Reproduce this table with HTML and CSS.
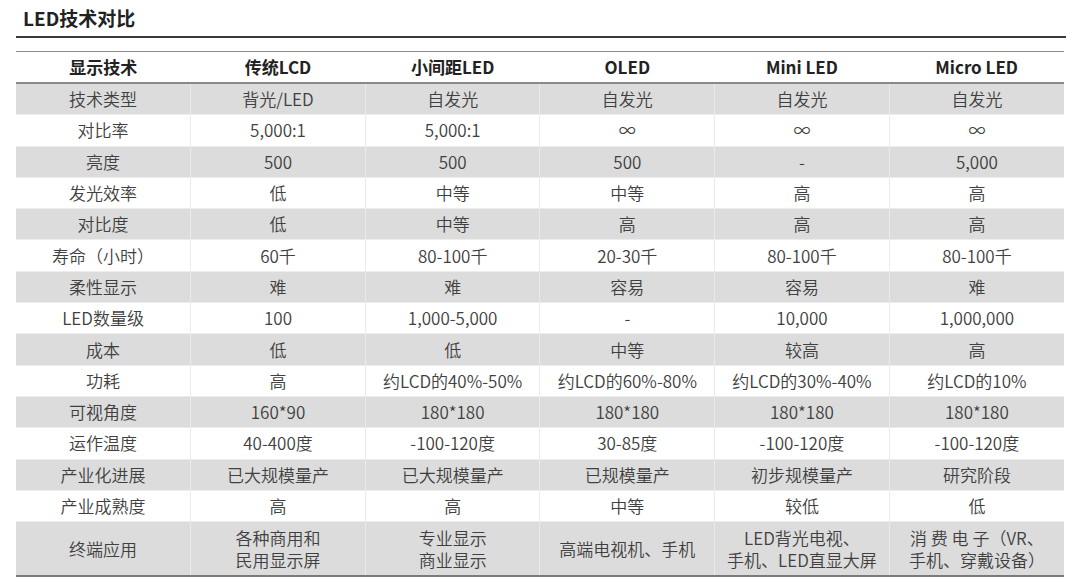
FILE: index.html
```html
<!DOCTYPE html>
<html lang="zh-CN">
<head>
<meta charset="utf-8">
<title>LED技术对比</title>
<link rel="stylesheet" href="styles.css">
</head>
<body>
<div class="page">
  <h2 class="title">LED技术对比</h2>
  <table class="cmp">
    <thead>
      <tr><th>显示技术</th><th>传统LCD</th><th>小间距LED</th><th>OLED</th><th>Mini LED</th><th>Micro LED</th></tr>
    </thead>
    <tbody>
      <tr class="g"><td>技术类型</td><td>背光/LED</td><td>自发光</td><td>自发光</td><td>自发光</td><td>自发光</td></tr>
      <tr><td>对比率</td><td>5,000:1</td><td>5,000:1</td><td>∞</td><td>∞</td><td>∞</td></tr>
      <tr class="g"><td>亮度</td><td>500</td><td>500</td><td>500</td><td>-</td><td>5,000</td></tr>
      <tr><td>发光效率</td><td>低</td><td>中等</td><td>中等</td><td>高</td><td>高</td></tr>
      <tr class="g"><td>对比度</td><td>低</td><td>中等</td><td>高</td><td>高</td><td>高</td></tr>
      <tr><td>寿命（小时）</td><td>60千</td><td>80-100千</td><td>20-30千</td><td>80-100千</td><td>80-100千</td></tr>
      <tr class="g"><td>柔性显示</td><td>难</td><td>难</td><td>容易</td><td>容易</td><td>难</td></tr>
      <tr><td>LED数量级</td><td>100</td><td>1,000-5,000</td><td>-</td><td>10,000</td><td>1,000,000</td></tr>
      <tr class="g"><td>成本</td><td>低</td><td>低</td><td>中等</td><td>较高</td><td>高</td></tr>
      <tr><td>功耗</td><td>高</td><td>约LCD的40%-50%</td><td>约LCD的60%-80%</td><td>约LCD的30%-40%</td><td>约LCD的10%</td></tr>
      <tr class="g"><td>可视角度</td><td>160*90</td><td>180*180</td><td>180*180</td><td>180*180</td><td>180*180</td></tr>
      <tr><td>运作温度</td><td>40-400度</td><td>-100-120度</td><td>30-85度</td><td>-100-120度</td><td>-100-120度</td></tr>
      <tr class="g"><td>产业化进展</td><td>已大规模量产</td><td>已大规模量产</td><td>已规模量产</td><td>初步规模量产</td><td>研究阶段</td></tr>
      <tr><td>产业成熟度</td><td>高</td><td>高</td><td>中等</td><td>较低</td><td>低</td></tr>
      <tr class="g tall">
        <td>终端应用</td>
        <td><span class="ln">各种商用和</span><span class="ln">民用显示屏</span></td>
        <td><span class="ln">专业显示</span><span class="ln">商业显示</span></td>
        <td>高端电视机、手机</td>
        <td><span class="ln">LED背光电视、</span><span class="ln">手机、LED直显大屏</span></td>
        <td><span class="ln">消 费 电 子（VR、</span><span class="ln">手机、穿戴设备）</span></td>
      </tr>
    </tbody>
  </table>
</div>
</body>
</html>
```

FILE: styles.css
```css
html, body {
  margin: 0;
  padding: 0;
  background: #ffffff;
}

body {
  font-family: "Noto Sans CJK SC", "Noto Sans", sans-serif;
  color: #404040;
}

.page {
  width: 1050px;
  padding: 0 0 0 16px;
}

.title {
  margin: 0;
  padding: 5px 0 5px 7px;
  font-size: 19px;
  line-height: 26px;
  font-weight: 700;
  color: #222222;
  border-bottom: 2px solid #3a3a3a;
}

.cmp {
  margin-top: 13px;
  width: 1048px;
  border-collapse: collapse;
  table-layout: fixed;
  border-top: 1px solid #8c8c8c;
  border-bottom: 2px solid #7a7a7a;
}

.cmp th,
.cmp td {
  padding: 0;
  text-align: center;
  vertical-align: middle;
  font-size: 17px;
  line-height: 18px;
  white-space: nowrap;
}

.cmp th {
  height: 30px;
  font-weight: 700;
  color: #222222;
  border-bottom: 2px solid #8a8a8a;
}

.cmp td {
  height: 30.3px;
  font-weight: 350;
  border-left: 1px solid #ebebeb;
  border-right: 1px solid #ebebeb;
  border-top: 1px solid #ededed;
}

.cmp td:first-child {
  border-left: none;
}

.cmp td:last-child {
  border-right: none;
}

.cmp tr.g td {
  background: #dcdcdc;
}

.cmp tr.tall td {
  height: 53px;
  line-height: 22px;
}

.ln {
  display: block;
  line-height: 22px;
}
```
